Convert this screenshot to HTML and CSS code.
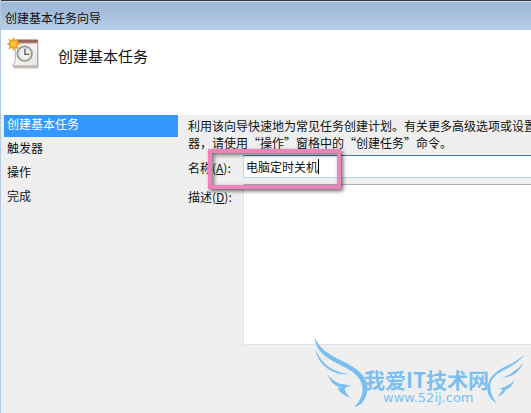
FILE: index.html
```html
<!DOCTYPE html>
<html lang="zh-CN">
<head>
<meta charset="utf-8">
<title>创建基本任务向导</title>
<link rel="stylesheet" href="styles.css">
</head>
<body>
<div class="wizard">
  <div class="titlebar">创建基本任务向导</div>
  <header class="header">
    <svg class="task-icon" viewBox="0 0 96 99" aria-hidden="true">
      <defs>
        <linearGradient id="paper" x1="0" y1="0" x2="1" y2="1"><stop offset="0" stop-color="#fff"/><stop offset="1" stop-color="#e8e4e1"/></linearGradient>
        <linearGradient id="face" x1="0" y1="0" x2="1" y2="1"><stop offset="0" stop-color="#e8eff9"/><stop offset="1" stop-color="#fff7df"/></linearGradient>
      </defs>
      <path d="M22 83h65l7-72v83H20z" fill="#aaa3a0"/>
      <path d="M20 85h73v9H20z" fill="#c9c3c0"/>
      <path d="M25 9h67v75q-6 4-12 3H16q8-7 9-20z" fill="url(#paper)" stroke="#958b87" stroke-width="2"/>
      <path d="M26 8h67v12H26z" fill="#9a6659"/>
      <path d="M26 17h67v4H26z" fill="#d6beb5"/>
      <circle cx="53" cy="50" r="22" fill="url(#face)" stroke="#949799" stroke-width="5"/>
      <circle cx="53" cy="50" r="17" fill="none" stroke="#c8cdd2" stroke-width="2"/>
      <path d="M54 35v17h13" fill="none" stroke="#51596b" stroke-width="4"/>
      <path d="M20 0l5 10 10-5-3 11 12 5-12 4 4 12-11-4-5 10-5-10-11 4 4-11-9-5 9-6-4-10 11 4z" fill="#eda329"/>
      <circle cx="20" cy="21" r="8" fill="#ffc43f"/>
    </svg>
    <h1 class="heading">创建基本任务</h1>
  </header>
  <div class="content">
    <nav class="steps">
      <a class="step current" href="#">创建基本任务</a>
      <a class="step" href="#">触发器</a>
      <a class="step" href="#">操作</a>
      <a class="step" href="#">完成</a>
    </nav>
    <main class="page">
      <p class="intro">利用该向导快速地为常见任务创建计划。有关更多高级选项或设置<br>器，请使用“操作”窗格中的“创建任务”命令。</p>
      <form class="form">
        <label class="label" for="name">名称(<u>A</u>):</label>
        <div class="name-field">
          <input class="name" id="name" type="text" value="电脑定时关机">
          <span class="caret"></span>
          <span class="highlight"></span>
        </div>
        <label class="label" for="desc">描述(<u>D</u>):</label>
        <textarea class="desc" id="desc"></textarea>
      </form>
    </main>
  </div>
  <div class="watermark">
    <svg class="wings" viewBox="0 0 693 264" aria-hidden="true">
      <g fill="#7abff0">
        <path d="M44 36C55 67 82 86 119 104C161 124 198 145 202 183C205 218 184 244 162 246C181 229 190 209 187 184C181 151 151 133 113 116C71 96 45 72 44 36z"/>
        <path d="M46 72C60 103 76 124 108 137Q127 146 147 147Q113 151 83 131Q51 109 46 72z"/>
        <path d="M83 149C98 166 113 176 131 178L153 182Q137 184 134 192Q138 207 151 219Q124 210 112 190Q115 188 121 188Q93 178 83 149z"/>
        <path d="M675 88C657 110 637 123 613 135C583 149 568 167 571 189Q573 215 591 235C569 224 560 204 563 183C568 151 596 134 624 121Q654 107 675 88z"/>
        <path d="M669 113C659 140 638 157 605 158Q630 151 642 139Q658 130 669 113z"/>
        <path d="M643 165C637 184 627 191 617 195Q609 210 592 216Q605 203 607 192L595 191Q626 186 643 165z"/>
      </g>
    </svg>
    <span class="brand">我爱IT技术网</span>
    <span class="site">www.52ij.com</span>
  </div>
</div>
</body>
</html>
```
FILE: styles.css
```css
* {
  box-sizing: border-box;
}

body {
  margin: 0;
  background: #efefef;
  color: #111;
  font-family: "Noto Sans CJK SC", sans-serif;
  font-size: 12px;
  line-height: 17px;
}

.wizard {
  position: relative;
  display: flex;
  flex-direction: column;
  min-height: 100vh;
  overflow: hidden;
  border-left: 1px solid #b5c9df;
}

.titlebar {
  height: 30px;
  padding: 8px 4px 0;
  border-top: 1px solid #34363e;
  background: linear-gradient(#d3e0ef 0, #9db7d7 2px, #a5bddb 12px, #b8cfe9 100%);
}

.header {
  display: flex;
  gap: 19px;
  height: 85px;
  padding: 7px 6px;
  background: #fff;
}

.task-icon {
  width: 32px;
  height: 33px;
}

.heading {
  margin: 8px 0 0;
  font-size: 15px;
  font-weight: 400;
  line-height: 22px;
}

.content {
  display: flex;
}

.steps {
  display: flex;
  flex: 0 0 177px;
  flex-direction: column;
  gap: 2px;
  padding-left: 3px;
}

.step {
  height: 22px;
  padding: 0 3px;
  color: inherit;
  line-height: 17px;
  text-decoration: none;
}

.current {
  background: #3399ff;
  color: #fff;
}

.page {
  flex: 1;
  min-width: 0;
  padding: 2px 0 0 10px;
}

.intro {
  margin: 0;
  white-space: nowrap;
}

.form {
  display: grid;
  grid-template-columns: 55px 1fr;
  row-gap: 6px;
  margin-top: 4px;
}

.label {
  padding-top: 4px;
}

.name-field {
  position: relative;
}

.name,
.desc {
  display: block;
  width: 100%;
  margin: 0;
  border: 1px solid #b7d5e8;
  border-right: 0;
  border-radius: 0;
  outline: 0;
  background: #fff;
  color: inherit;
  font: inherit;
}

.name {
  height: 23px;
  padding: 0 2px;
  border-top-color: #3d7bad;
}

.desc {
  height: 161px;
  padding: 2px;
  border-color: #abadb3 #e2e3e6 #e2e3e6;
  resize: none;
}

.caret {
  position: absolute;
  top: 4px;
  left: 75px;
  width: 1px;
  height: 15px;
  background: #000;
}

.highlight {
  position: absolute;
  top: -6px;
  left: -35px;
  width: 133px;
  height: 40px;
  border: 4px solid #ee82b9;
  box-shadow: 2px 2px 4px #0009, inset 2px 2px 4px #0008;
  pointer-events: none;
}

.watermark {
  position: absolute;
  right: 0;
  bottom: 0;
  width: 231px;
  height: 88px;
  color: #7abff0;
  white-space: nowrap;
}

.wings {
  display: block;
  width: 100%;
  height: 100%;
}

.brand {
  position: absolute;
  top: 43px;
  left: 64px;
  font-size: 21px;
  font-weight: 700;
  line-height: 22px;
}

.site {
  position: absolute;
  top: 66px;
  left: 83px;
  font-family: "DejaVu Sans", sans-serif;
  font-size: 13px;
  line-height: 14px;
}
```
